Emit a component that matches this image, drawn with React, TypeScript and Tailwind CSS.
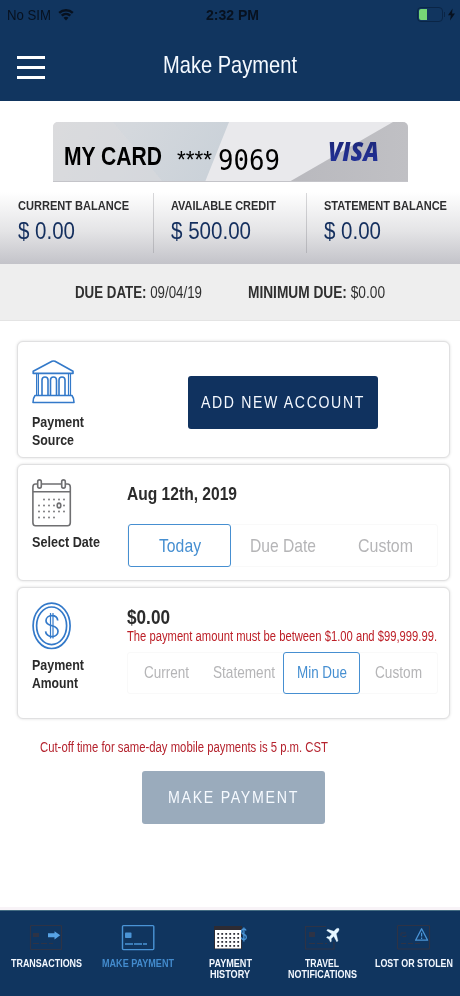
import React, { useLayoutEffect, useRef, useState } from "react";

type FitProps = { w: number; className?: string; children: React.ReactNode };

// A single line of text condensed or expanded horizontally to a given width.
function Fit({ w, className = "", children }: FitProps) {
  const ref = useRef<HTMLSpanElement>(null);
  const [scale, setScale] = useState(1);
  useLayoutEffect(() => {
    const el = ref.current;
    if (el && el.offsetWidth) setScale((w / el.getBoundingClientRect().width) * scale);
  }, [w]);
  return (
    <span className={`block shrink-0 ${className}`} style={{ width: w }}>
      <span
        ref={ref}
        className="inline-block origin-left whitespace-nowrap align-top"
        style={{ transform: `scaleX(${scale})` }}
      >
        {children}
      </span>
    </span>
  );
}

function StatusBar() {
  return (
    <div className="grid h-[29px] grid-cols-3 items-center text-[15px] leading-[29px] text-[#07111f]">
      <div className="flex items-center gap-[7px] pl-[7px]">
        <Fit w={44}>No SIM</Fit>
        <svg width="16" height="13" viewBox="0 0 16 13" className="mb-px">
          <path d="M8 12.6 5.5 9.8a3.8 3.8 0 0 1 5 0Z" fill="#07111f" />
          <path d="M3.7 7.7a6.4 6.4 0 0 1 8.6 0M1.2 4.9a10 10 0 0 1 13.6 0" fill="none" stroke="#07111f" strokeWidth="2.4" />
        </svg>
      </div>
      <div className="flex justify-center pl-[5px]">
        <Fit w={53} className="font-bold">2:32 PM</Fit>
      </div>
      <div className="flex items-center justify-end gap-[3px] pr-[5px]">
        <div className="flex items-center gap-px">
          <div className="flex h-[15px] w-[26px] items-center rounded-[4px] border border-[#0a2546] p-px">
            <div className="h-[11px] w-[8px] rounded-l-[2px] bg-[#76d776]" />
          </div>
          <div className="h-[5px] w-px bg-[#0a2546]" />
        </div>
        <svg width="7" height="13" viewBox="0 0 7 13">
          <path d="M4.6.5 0 7.2h2.8L2 12.5l5-6.9H4Z" fill="#07111f" />
        </svg>
      </div>
    </div>
  );
}

function Header() {
  return (
    <header className="h-[101px] bg-[#11355f]">
      <StatusBar />
      <div className="grid h-[72px] grid-cols-[45px_1fr_45px] items-center">
        <div className="mt-[5px] flex flex-col gap-[7px] pl-[17px]">
          <div className="h-[3px] bg-white" />
          <div className="h-[3px] bg-white" />
          <div className="h-[3px] bg-white" />
        </div>
        <div className="flex justify-center">
          <Fit w={134} className="text-[24px] leading-[28px] text-[#f4f9ff]">Make Payment</Fit>
        </div>
      </div>
    </header>
  );
}

function PaymentCard() {
  return (
    <div className="relative mx-auto mt-[21px] h-[60px] w-[355px] overflow-hidden rounded-t-[5px] bg-[#e9e9ec]">
      <svg width="355" height="60" className="absolute inset-0">
        <defs>
          <linearGradient id="cardLeft" x1="0" x2="1" y1="0" y2="0.2">
            <stop offset="0" stopColor="#dadadd" />
            <stop offset="0.45" stopColor="#d4d8dd" />
            <stop offset="1" stopColor="#cbd2d9" />
          </linearGradient>
          <linearGradient id="cardRight" x1="0" x2="1" y1="0" y2="0">
            <stop offset="0" stopColor="#b9b9be" />
            <stop offset="1" stopColor="#c0c0c4" />
          </linearGradient>
        </defs>
        <path d="M0 0H176L152 60H0Z" fill="url(#cardLeft)" />
        <path d="M60 0 110 60H0V0Z" fill="#dbdbde" opacity=".45" />
        <path d="M236 60 340 0H355V60Z" fill="url(#cardRight)" />
        <path d="M0 59.5H355" stroke="#c4c4c9" />
      </svg>
      <div className="relative flex h-full items-start pl-[11px] text-black">
        <Fit w={98} className="mt-[19px] text-[26px] font-bold leading-[30px]">MY CARD</Fit>
        <Fit w={35} className="ml-[15px] mt-[25px] text-[23px] leading-[26px]">****</Fit>
        <Fit w={62} className="ml-[6px] mt-[22px] font-['DejaVu_Sans_Mono',monospace] text-[28px] leading-[33px]">9069</Fit>
        <Fit w={51} className="ml-[48px] mt-[13px] font-['Open_Sans',sans-serif] text-[27px] font-extrabold italic leading-[32px]">
          <span className="bg-linear-to-b from-[#1b2470] to-[#2434a0] bg-clip-text text-transparent">VISA</span>
        </Fit>
      </div>
    </div>
  );
}

const balances = [
  { label: "CURRENT BALANCE", lw: 111, value: "$ 0.00", vw: 57 },
  { label: "AVAILABLE CREDIT", lw: 105, value: "$ 500.00", vw: 80 },
  { label: "STATEMENT BALANCE", lw: 123, value: "$ 0.00", vw: 57 },
];

function Balances() {
  return (
    <div className="flex h-[82px] bg-linear-to-b from-white from-12% via-[#e4e4e6] via-60% to-[#c3c3c9] pt-[11px]">
      {balances.map((b, i) => (
        <div key={b.label} className="flex w-[153px]">
          <div className={i ? "h-[60px] w-px bg-linear-to-b from-[#d8d8da] to-[#b4b4b9]" : "h-[60px] w-px"} />
          <div className="pl-[17px] pt-[4px]">
            <Fit w={b.lw} className="text-[13px] font-bold leading-[17px] text-[#2e2e30]">{b.label}</Fit>
            <Fit w={b.vw} className="mt-[3px] text-[24px] leading-[28px] text-[#142f5e]">{b.value}</Fit>
          </div>
        </div>
      ))}
    </div>
  );
}

function DueInfo() {
  return (
    <div className="flex h-[57px] border-b border-[#e4e4e4] bg-[#eeeeee] pl-[75px] text-[16px] leading-[57px] text-[#2f2f2f]">
      <Fit w={127}><b>DUE DATE:</b> 09/04/19</Fit>
      <Fit w={137} className="ml-[46px]"><b>MINIMUM DUE:</b> $0.00</Fit>
    </div>
  );
}

function BankIcon() {
  return (
    <svg width="44" height="44" viewBox="0 0 44 44" fill="none" stroke="#3379c9" strokeWidth="1.6" strokeLinejoin="round">
      <path d="M1.2 11.2 20 1.3q1.5-.7 3 0L41 11.2v2.200H1.2Z" />
      <path d="M4.600 13.500V35M6.400 13.500V35M36.500 13.500V35M38.500 13.500V35" strokeWidth="1.2" />
      <path d="M10 35V20q0-3 3-3t3 3V35M18.500 35V20q0-3 3-3t3 3V35M27 35V20q0-3 3-3t3 3V35" />
      <path d="M3 35.500H40Q42 38 42 42.500H1Q1 38 3 35.500Z" />
    </svg>
  );
}

const calendarRows = [
  { y: 20.5, xs: [12, 17, 22, 27, 32] },
  { y: 26.5, xs: [7, 12, 17, 22, 32] },
  { y: 32.5, xs: [7, 12, 17, 22, 27, 32] },
  { y: 38.5, xs: [7, 12, 17, 22] },
];

function CalendarIcon() {
  return (
    <svg width="40" height="48" viewBox="0 0 40 48" fill="none" stroke="#6f6f71" strokeWidth="1.6">
      <path d="M5.500 5H3.500Q.9 5 .9 8V43.500Q.9 46.800 3.500 46.800H35.500Q38.300 46.800 38.300 43.500V8Q38.300 5 35.500 5H33.500M9.500 5H29.500M1 12.800H38" />
      <rect x="5.700" y=".9" width="3.600" height="8.200" rx="1.800" />
      <rect x="29.700" y=".9" width="3.600" height="8.200" rx="1.800" />
      <ellipse cx="27" cy="26.500" rx="1.800" ry="2.400" />
      {calendarRows.map((r) =>
        r.xs.map((x) => <circle key={`${x}-${r.y}`} cx={x} cy={r.y} r=".9" fill="#6f6f71" stroke="none" />)
      )}
    </svg>
  );
}

function CoinIcon() {
  return (
    <svg width="40" height="48" viewBox="0 0 40 48" fill="none" stroke="#3379c9" strokeWidth="1.7">
      <ellipse cx="19.600" cy="23.800" rx="18.500" ry="22.700" />
      <ellipse cx="19.600" cy="23.800" rx="15" ry="18.800" />
      <path d="M25.700 18.500C25.500 15.500 23 13.700 19.800 13.700S14 15.700 14 18.700C14 22 17 22.900 20 23.700S26 26 26 29.300 23.200 34.600 20 34.600 13.700 32.500 13.600 29.400" />
      <path d="M18.500 11V36.600M21 11V36.600" strokeWidth="1.2" />
    </svg>
  );
}

const panel = "mx-auto flex w-[433px] rounded-[6px] border border-[#e0e0e1] bg-white pl-[14px] shadow-[0_0_3px_rgba(0,0,0,0.14)]";
const caption = "text-[15px] font-bold leading-[17.5px] text-[#2b2b2b]";

type Option = { text: string; tw: number; col: string; active?: boolean };

function Segments({ options, className }: { options: Option[]; className: string }) {
  return (
    <div className={`flex w-[311px] rounded-[3px] border border-[#f9f9f9] ${className}`}>
      {options.map((o) => (
        <div
          key={o.text}
          className={`-my-px flex items-center justify-center ${o.col} ${
            o.active ? "rounded-[3px] border border-[#468fd1] text-[#468fd1]" : "text-[#b5b5b7]"
          }`}
        >
          <Fit w={o.tw}>{o.text}</Fit>
        </div>
      ))}
    </div>
  );
}

function Source() {
  return (
    <section className={`${panel} mt-[20px] h-[117px]`}>
      <div className="w-[156px] pt-[18px]">
        <BankIcon />
        <div className={`mt-[9px] ${caption}`}>
          <Fit w={52}>Payment</Fit>
          <Fit w={42}>Source</Fit>
        </div>
      </div>
      <button className="mt-[34px] flex h-[53px] w-[190px] items-center justify-center rounded-[3px] bg-[#10325f] text-[#f5f9ff]">
        <Fit w={164} className="text-[17px] leading-[20px] tracking-[2px]">ADD NEW ACCOUNT</Fit>
      </button>
    </section>
  );
}

function SelectDate() {
  return (
    <section className={`${panel} mt-[6px] h-[117px]`}>
      <div className="w-[95px] pt-[14px]">
        <CalendarIcon />
        <Fit w={68} className={`mt-[6px] ${caption}`}>Select Date</Fit>
      </div>
      <div className="pt-[17px]">
        <Fit w={110} className="text-[19px] font-bold leading-[24px] text-[#2b2b2b]">Aug 12th, 2019</Fit>
        <Segments
          className="mt-[18px] h-[43px] text-[19px] leading-[24px]"
          options={[
            { text: "Today", tw: 42, col: "w-[103px]", active: true },
            { text: "Due Date", tw: 66, col: "w-[103px]" },
            { text: "Custom", tw: 55, col: "w-[103px]" },
          ]}
        />
      </div>
    </section>
  );
}

function Amount() {
  return (
    <section className={`${panel} mt-[6px] h-[132px]`}>
      <div className="w-[95px] pt-[14px]">
        <CoinIcon />
        <div className={`mt-[6px] ${caption}`}>
          <Fit w={52}>Payment</Fit>
          <Fit w={46}>Amount</Fit>
        </div>
      </div>
      <div className="pt-[17px]">
        <Fit w={43} className="text-[20px] font-bold leading-[24px] text-[#2b2b2b]">$0.00</Fit>
        <Fit w={310} className="text-[14px] leading-[14px] text-[#bd2028]">
          The payment amount must be between $1.00 and $99,999.99.
        </Fit>
        <Segments
          className="mt-[9px] h-[42px] text-[17px] leading-[20px]"
          options={[
            { text: "Current", tw: 45, col: "w-[77px]" },
            { text: "Statement", tw: 62, col: "w-[78px]" },
            { text: "Min Due", tw: 50, col: "w-[77px]", active: true },
            { text: "Custom", tw: 47, col: "w-[77px]" },
          ]}
        />
      </div>
    </section>
  );
}

const dim = "#2e3345";

function TransactionsIcon() {
  return (
    <svg width="40" height="28" viewBox="0 0 40 28" fill="none">
      <rect x="4.500" y="1.500" width="31" height="24" rx="1" stroke={dim} strokeWidth="1.2" />
      <rect x="7" y="9" width="6" height="4" fill={dim} />
      <path d="M7 19.500H27" stroke={dim} strokeDasharray="6 2" />
      <path d="M22 9.200H28.500V7.200L34.200 11.300 28.500 15.400V13.300H22Z" fill="#58a3e5" />
    </svg>
  );
}

function MakePaymentIcon() {
  return (
    <svg width="40" height="28" viewBox="0 0 40 28" fill="none">
      <rect x="4.500" y="1.600" width="31.300" height="24" rx="1" stroke="#4a94d6" strokeWidth="1.4" />
      <rect x="7" y="8.600" width="6.500" height="5.400" rx=".8" fill="#4a94d6" />
      <path d="M7 20H29" stroke="#4a94d6" strokeWidth="1.500" strokeDasharray="8 1 8 1" />
    </svg>
  );
}

function HistoryIcon() {
  return (
    <svg width="40" height="28" viewBox="0 0 40 28" fill="none">
      <rect x="4" y="2" width="28" height="23" fill="#2d2b33" />
      <rect x="5" y="6" width="26" height="18.500" fill="#fff" />
      {[9, 13, 17, 21].map((y) =>
        [8, 12, 16, 20, 24, 28].map((x) => (
          <rect key={`${x}-${y}`} x={x - 0.7} y={y} width="1.800" height="1.800" fill="#30303a" />
        ))
      )}
      <path d="M36 6.500Q35.700 5 33.800 5 31.600 5.200 31.600 7.500 31.600 9.700 33.800 10.400 36.300 11 36.300 13.500 36 15.700 33.900 15.700 31.500 15.500 31.300 13.400M33.900 3.400V17.400" stroke="#4a94d6" strokeWidth="1.300" />
    </svg>
  );
}

function TravelIcon() {
  return (
    <svg width="40" height="28" viewBox="0 0 40 28" fill="none">
      <path d="M24 2.500H3.500V25H32V18" stroke={dim} strokeWidth="1.2" />
      <rect x="7" y="8" width="6" height="5" fill={dim} />
      <path d="M7 19.500H25" stroke={dim} strokeDasharray="6 2" />
      <path
        transform="translate(23.800 4.300) scale(.88 .95)"
        d="M14.800.3C13.700-.5 12.300.1 11.300 1.100L9.300 3.200 2.200 1.100 1 2.300 6.800 6 4.200 9 1.800 8.700.7 9.800 3.700 11.500 5.300 14.600 6.400 13.500 6.200 11.100 9 8.400 12.600 14.300 13.800 13 11.900 5.700 14 3.600C15 2.600 15.500 1.200 14.800.3Z"
        fill="#e6f6ff"
        stroke="#e6f6ff"
        strokeWidth=".3"
      />
    </svg>
  );
}

function LostIcon() {
  return (
    <svg width="40" height="28" viewBox="0 0 40 28" fill="none">
      <rect x="3.500" y="1.500" width="32" height="23.500" rx="1" stroke={dim} strokeWidth="1.2" />
      <path d="M7 9H12V12.500H7ZM7 19.500H27" stroke={dim} strokeDasharray="5 2" />
      <path d="M27.600 4.800 33.600 16.200H21.600Z" stroke="#4a94d6" strokeWidth="1.300" strokeLinejoin="round" />
      <path d="M27.600 8.800V12.600M27.600 13.600V15" stroke="#4a94d6" strokeWidth="1.200" />
    </svg>
  );
}

const tabs = [
  { Icon: TransactionsIcon, lines: [["TRANSACTIONS", 71]] },
  { Icon: MakePaymentIcon, lines: [["MAKE PAYMENT", 72]], active: true },
  { Icon: HistoryIcon, lines: [["PAYMENT", 43], ["HISTORY", 40]] },
  { Icon: TravelIcon, lines: [["TRAVEL", 34], ["NOTIFICATIONS", 69]] },
  { Icon: LostIcon, lines: [["LOST OR STOLEN", 78]] },
] as { Icon: () => React.ReactElement; lines: [string, number][]; active?: boolean }[];

function TabBar() {
  return (
    <nav className="grid h-[86px] grid-cols-5 border-t border-[#436c82] bg-[#10355f] pt-[13px]">
      {tabs.map(({ Icon, lines, active }) => (
        <div key={lines[0][0]} className="flex flex-col items-center">
          <Icon />
          <div className={`mt-[6px] flex flex-col items-center text-[11.3px] font-bold leading-[11px] ${active ? "text-[#438bcd]" : "text-[#f3f8ff]"}`}>
            {lines.map(([text, w]) => (
              <Fit key={text} w={w}>{text}</Fit>
            ))}
          </div>
        </div>
      ))}
    </nav>
  );
}

export default function App() {
  return (
    <div className="flex h-[996px] w-[460px] flex-col overflow-hidden bg-white font-['Liberation_Sans',Arial,sans-serif]">
      <Header />
      <PaymentCard />
      <Balances />
      <DueInfo />
      <main className="w-[467px] grow">
        <Source />
        <SelectDate />
        <Amount />
        <Fit w={288} className="ml-[40px] mt-[20px] text-[14px] leading-[16px] text-[#b5232e]">
          Cut-off time for same-day mobile payments is 5 p.m. CST
        </Fit>
        <button className="ml-[142px] mt-[16px] flex h-[53px] w-[183px] items-center justify-center rounded-[3px] bg-[#9aabbc] text-[#f6faff]">
          <Fit w={131} className="text-[17px] leading-[20px] tracking-[2px]">MAKE PAYMENT</Fit>
        </button>
      </main>
      <div className="h-[3px] bg-[#f8f3f7]" />
      <TabBar />
    </div>
  );
}
